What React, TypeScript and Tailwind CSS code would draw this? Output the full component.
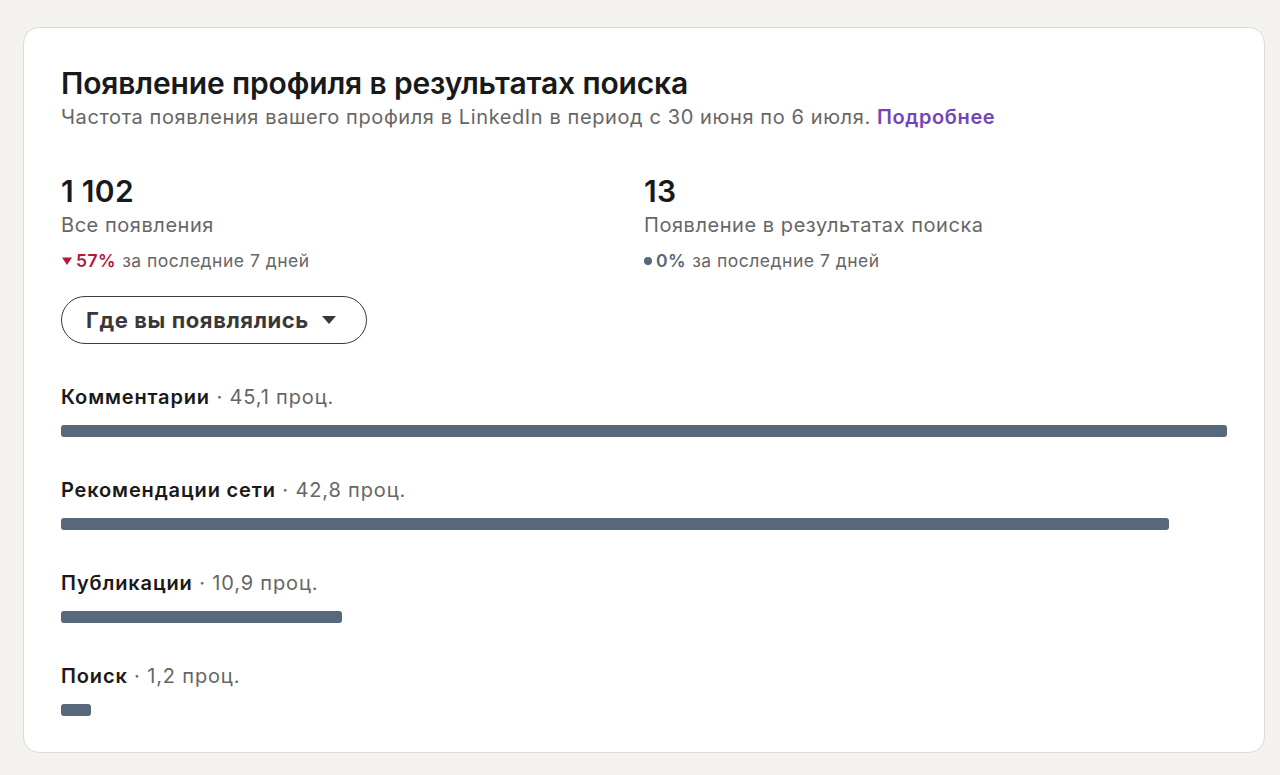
import React from "react";

type Row = { label: string; value: string; pct: number };

const rows: Row[] = [
  { label: "Комментарии", value: "45,1 проц.", pct: 100 },
  { label: "Рекомендации сети", value: "42,8 проц.", pct: 95.0 },
  { label: "Публикации", value: "10,9 проц.", pct: 24.1 },
  { label: "Поиск", value: "1,2 проц.", pct: 2.6 },
];

function Stat({
  value,
  label,
  change,
  down,
}: {
  value: string;
  label: string;
  change: string;
  down?: boolean;
}) {
  return (
    <div className="flex flex-col">
      <div className="text-[30px] font-semibold leading-[36px] tracking-[0.3px] text-[#191919]">
        {value}
      </div>
      <div className="mt-[2px] text-[20px] leading-[28px] tracking-[0.55px] text-[#666666]">
        {label}
      </div>
      <div className="mt-[10px] flex items-center text-[17.5px] leading-[24px] tracking-[0.5px] text-[#666666]">
        {down ? (
          <svg width="12" height="10" viewBox="0 0 12 10" className="mr-[3px]">
            <path d="M1 1.5h10L6 9z" fill="#b3183d" />
          </svg>
        ) : (
          <span className="mr-[4px] inline-block h-[8px] w-[8px] rounded-full bg-[#56687a]" />
        )}
        <span className={down ? "font-semibold text-[#b3183d]" : "font-semibold text-[#56687a]"}>
          {change}
        </span>
        <span className="ml-[6px]">за последние 7 дней</span>
      </div>
    </div>
  );
}

export default function App() {
  return (
    <div
      className="min-h-[775px] w-full bg-[#f3f2ee] pl-[23px] pt-[27px]"
      style={{ fontFamily: "Inter, 'Noto Sans', sans-serif" }}
    >
      <div className="h-[726px] w-[1242px] rounded-[16px] border border-[#dddbd6] bg-white px-[37px] pt-[37px]">
        <h1 className="text-[30px] font-semibold leading-[36px] tracking-[-0.15px] text-[#191919]">
          Появление профиля в результатах поиска
        </h1>
        <p className="mt-[2px] text-[20px] leading-[28px] tracking-[0.6px] text-[#666666]">
          Частота появления вашего профиля в LinkedIn в период с 30 июня по 6 июля.{" "}
          <span className="font-semibold text-[#7545b8]">Подробнее</span>
        </p>

        <div className="mt-[42px] grid grid-cols-2">
          <Stat value="1 102" label="Все появления" change="57%" down />
          <Stat value="13" label="Появление в результатах поиска" change="0%" />
        </div>

        <button className="mt-[23px] flex h-[48px] items-center rounded-full border-[1.5px] border-[#3a3a3a] pl-[24px] pr-[30px] text-[22px] font-bold tracking-[0.6px] text-[#383838]">
          Где вы появлялись
          <svg width="14" height="8" viewBox="0 0 14 8" className="ml-[13px]">
            <path d="M0 0h14L7 8z" fill="#383838" />
          </svg>
        </button>

        <div className="mt-[39px] flex flex-col gap-[39px]">
          {rows.map((r) => (
            <div key={r.label} className="flex flex-col">
              <div className="text-[20px] leading-[28px] tracking-[0.85px] text-[#666666]">
                <span className="font-semibold text-[#191919]">{r.label}</span>
                <span> · {r.value}</span>
              </div>
              <div className="mt-[14px] h-[12px]">
                <div
                  className="h-[12px] rounded-[3px] bg-[#56687a]"
                  style={{ width: `${r.pct}%` }}
                />
              </div>
            </div>
          ))}
        </div>
      </div>
    </div>
  );
}
